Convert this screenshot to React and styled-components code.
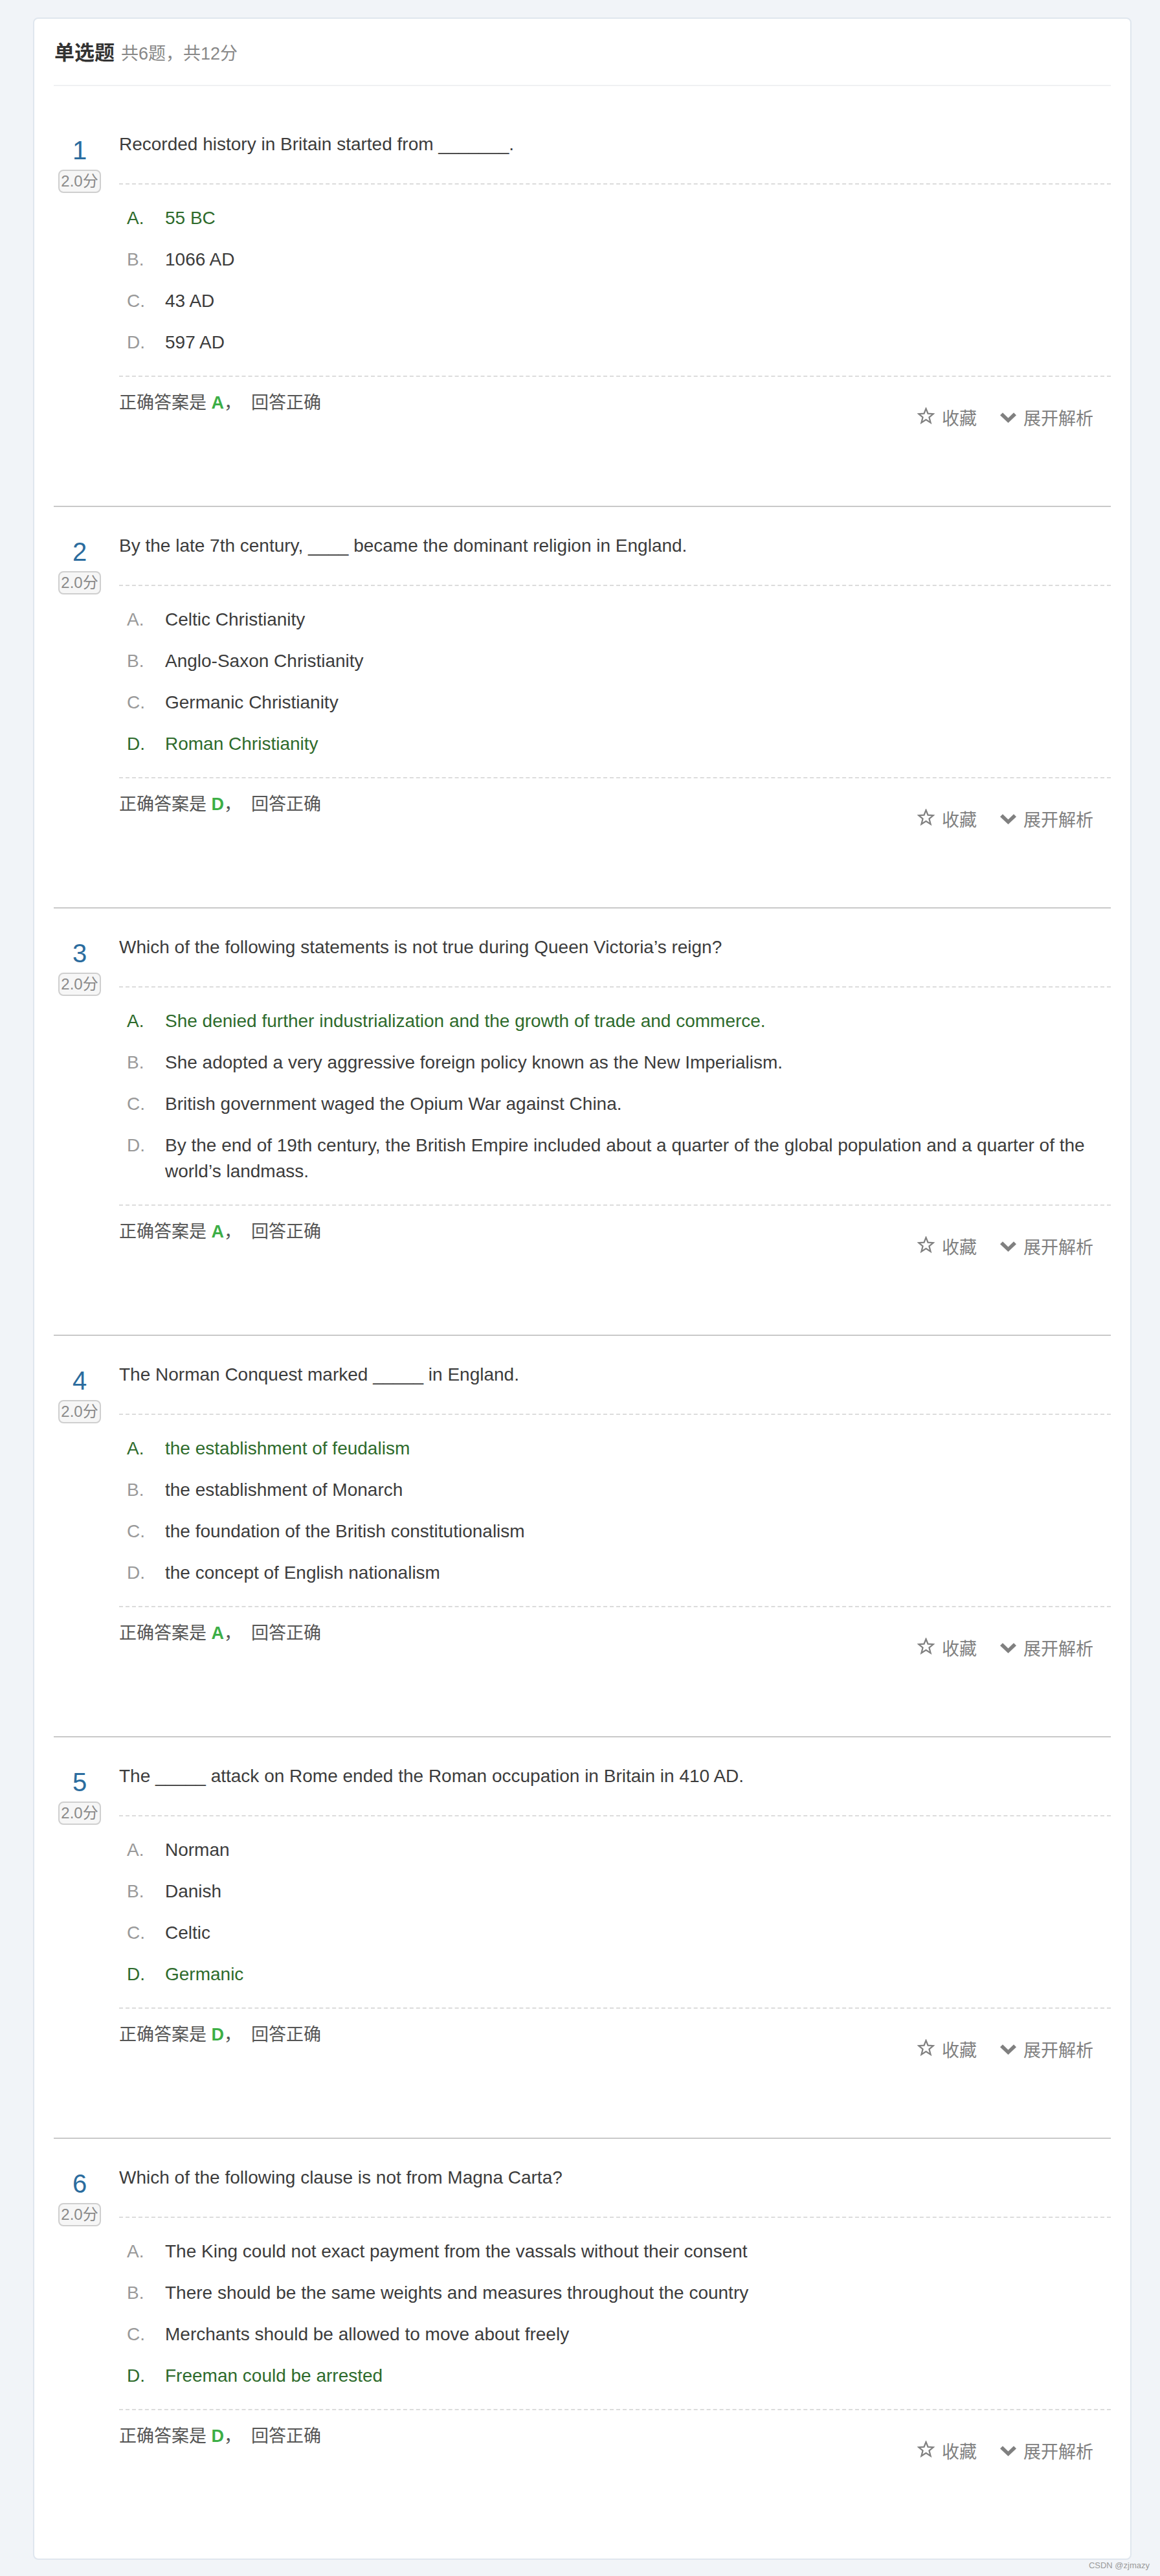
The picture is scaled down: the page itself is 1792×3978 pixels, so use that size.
import React from "react";
import styled, { createGlobalStyle } from "styled-components";

const GlobalStyle = createGlobalStyle`
  html, body {
    margin: 0;
    padding: 0;
    background: #f1f4f8;
  }
  body {
    font-family: "Liberation Sans", Arial, "Noto Sans CJK SC", sans-serif;
    color: #333;
  }
  * { box-sizing: border-box; }
`;

const Page = styled.div`
  padding: 27px 16px 7px 51px;
  background: #f1f4f8;
  min-height: 3978px;
`;

const Card = styled.div`
  margin-right: 28px;
  background: #fff;
  border: 2px solid #dfe6ee;
  border-radius: 8px;
  padding: 0 30px 30px 30px;
`;

const Header = styled.div`
  height: 104px;
  padding: 28px 0 0 1px;
  border-bottom: 2px solid #f0f1f2;
  display: flex;
  align-items: baseline;
  line-height: 44px;
  margin-bottom: 30px;
  overflow: hidden;
`;

const HeaderTitle = styled.span`
  font-family: "Noto Sans CJK SC", sans-serif;
  font-size: 31px;
  line-height: 44px;
  font-weight: 700;
  color: #333;
`;

const HeaderMeta = styled.span`
  font-family: "Liberation Sans", "Noto Sans CJK SC", sans-serif;
  font-size: 27px;
  line-height: 44px;
  color: #888;
  margin-left: 10px;
`;

const Question = styled.div`
  display: flex;
  padding: 40px 0 116px 0;
  border-bottom: ${(p) => (p.$last ? "none" : "2px solid #c9c9c9")};
`;

const Side = styled.div`
  width: 80px;
  flex: none;
  margin-right: 21px;
  display: flex;
  flex-direction: column;
  align-items: center;
  padding-top: 9px;
`;

const Num = styled.div`
  font-size: 40px;
  line-height: 40px;
  color: #2b6c9e;
  font-weight: 400;
`;

const Score = styled.div`
  margin-top: 10px;
  height: 36px;
  width: 66px;
  border: 2px solid #cfcfcf;
  border-radius: 8px;
  background: #f6f6f6;
  color: #8a8a8a;
  font-size: 24px;
  line-height: 32px;
  text-align: center;
  font-family: "Liberation Sans", "Noto Sans CJK SC", sans-serif;
  white-space: nowrap;
`;

const Main = styled.div`
  flex: 1;
  min-width: 0;
`;

const Stem = styled.div`
  font-size: 28px;
  line-height: 40px;
  color: #3c3c3c;
  padding-bottom: 40px;
  border-bottom: 2px dashed #dcdcdc;
`;

const Options = styled.div`
  padding: 20px 0 19px 0;
  border-bottom: 2px dashed #dcdcdc;
`;

const Option = styled.div`
  display: flex;
  padding: 12px 0;
  font-size: 28px;
  line-height: 40px;
  color: ${(p) => (p.$correct ? "#2e6b2c" : "#3c3c3c")};
`;

const Letter = styled.span`
  flex: none;
  width: 71px;
  padding-left: 12px;
  color: ${(p) => (p.$correct ? "#2e6b2c" : "#999")};
`;

const OptionText = styled.span`
  flex: 1;
`;

const Footer = styled.div`
  display: flex;
  justify-content: space-between;
  align-items: flex-start;
  padding-top: 20px;
`;

const AnswerText = styled.div`
  font-family: "Liberation Sans", "Noto Sans CJK SC", sans-serif;
  font-size: 27px;
  line-height: 40px;
  color: #555;
`;

const AnswerKey = styled.b`
  color: #3cae46;
  font-weight: 700;
`;

const Actions = styled.div`
  display: flex;
  align-items: center;
  gap: 36px;
  margin-top: 23px;
  margin-right: 27px;
`;

const ActionButton = styled.span`
  display: inline-flex;
  align-items: center;
  gap: 11px;
  font-family: "Noto Sans CJK SC", sans-serif;
  font-size: 27px;
  line-height: 40px;
  color: #808080;
  cursor: pointer;
`;

const Icon = styled.svg`
  display: block;
  flex: none;
  position: relative;
  top: ${(p) => p.$shift || 0}px;
`;

const Watermark = styled.div`
  text-align: right;
  font-size: 13px;
  line-height: 18px;
  color: #9a9a9a;
  font-family: "Liberation Sans", Arial, sans-serif;
`;

const StarIcon = () => (
  <Icon width="27" height="26" viewBox="0 0 24 23" $shift={-3}>
    <polygon
      points="12,1.8 14.7,8.6 22,9 16.4,13.7 18.3,21 12,16.9 5.7,21 7.6,13.7 2,9 9.3,8.6"
      fill="none"
      stroke="#808080"
      strokeWidth="2"
      strokeLinejoin="miter"
    />
  </Icon>
);

const ChevronIcon = () => (
  <Icon width="25" height="16" viewBox="0 0 25 16">
    <polygon points="0,4.2 4,0.2 12.5,8.4 21,0.2 25,4.2 12.5,16" fill="#808080" />
  </Icon>
);

const questions = [
  {
    stem: "Recorded history in Britain started from _______.",
    options: ["55 BC", "1066 AD", "43 AD", "597 AD"],
    answer: 0,
  },
  {
    stem: "By the late 7th century, ____ became the dominant religion in England.",
    options: [
      "Celtic Christianity",
      "Anglo-Saxon Christianity",
      "Germanic Christianity",
      "Roman Christianity",
    ],
    answer: 3,
  },
  {
    stem: "Which of the following statements is not true during Queen Victoria’s reign?",
    options: [
      "She denied further industrialization and the growth of trade and commerce.",
      "She adopted a very aggressive foreign policy known as the New Imperialism.",
      "British government waged the Opium War against China.",
      "By the end of 19th century, the British Empire included about a quarter of the global population and a quarter of the world’s landmass.",
    ],
    answer: 0,
  },
  {
    stem: "The Norman Conquest marked _____ in England.",
    options: [
      "the establishment of feudalism",
      "the establishment of Monarch",
      "the foundation of the British constitutionalism",
      "the concept of English nationalism",
    ],
    answer: 0,
  },
  {
    stem: "The _____ attack on Rome ended the Roman occupation in Britain in 410 AD.",
    options: ["Norman", "Danish", "Celtic", "Germanic"],
    answer: 3,
  },
  {
    stem: "Which of the following clause is not from Magna Carta?",
    options: [
      "The King could not exact payment from the vassals without their consent",
      "There should be the same weights and measures throughout the country",
      "Merchants should be allowed to move about freely",
      "Freeman could be arrested",
    ],
    answer: 3,
  },
];

const letters = ["A", "B", "C", "D"];

export default function App() {
  return (
    <>
      <GlobalStyle />
      <Page>
        <Card>
          <Header>
            <HeaderTitle>单选题</HeaderTitle>
            <HeaderMeta>共6题，共12分</HeaderMeta>
          </Header>
          {questions.map((q, i) => (
            <Question key={i} $last={i === questions.length - 1}>
              <Side>
                <Num>{i + 1}</Num>
                <Score>2.0分</Score>
              </Side>
              <Main>
                <Stem>{q.stem}</Stem>
                <Options>
                  {q.options.map((o, j) => (
                    <Option key={j} $correct={j === q.answer}>
                      <Letter $correct={j === q.answer}>{letters[j]}.</Letter>
                      <OptionText>{o}</OptionText>
                    </Option>
                  ))}
                </Options>
                <Footer>
                  <AnswerText>
                    正确答案是 <AnswerKey>{letters[q.answer]}</AnswerKey>，&nbsp;&nbsp;回答正确
                  </AnswerText>
                  <Actions>
                    <ActionButton>
                      <StarIcon />
                      收藏
                    </ActionButton>
                    <ActionButton>
                      <ChevronIcon />
                      展开解析
                    </ActionButton>
                  </Actions>
                </Footer>
              </Main>
            </Question>
          ))}
        </Card>
        <Watermark>CSDN @zjmazy</Watermark>
      </Page>
    </>
  );
}
